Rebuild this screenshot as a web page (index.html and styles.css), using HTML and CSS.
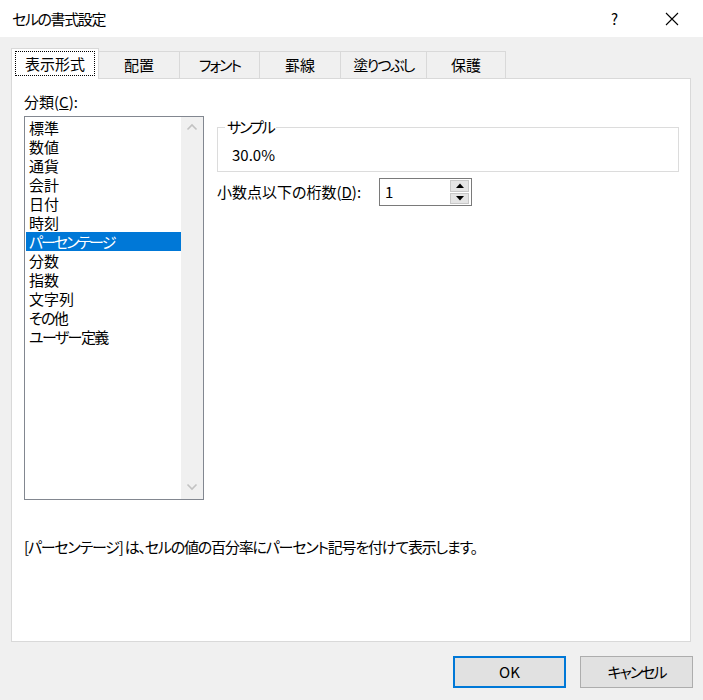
FILE: index.html
```html
<!DOCTYPE html>
<html lang="ja">
<head>
<meta charset="utf-8">
<link rel="stylesheet" href="styles.css">
</head>
<body>
<div class="dialog">
  <div class="titlebar">
    <div class="title">セルの書式設定</div>
    <div class="tb-btn help">?</div>
    <div class="tb-btn close">
      <svg width="14" height="14" viewBox="0 0 14 14"><path d="M1 1L13 13M13 1L1 13" stroke="#000" stroke-width="1.1" fill="none"/></svg>
    </div>
  </div>
  <div class="content">
    <div class="tabs">
      <div class="tab tab-sel"><span class="focus">表示形式</span></div>
      <div class="tab t2">配置</div>
      <div class="tab t3 kana">フォント</div>
      <div class="tab t4">罫線</div>
      <div class="tab t5 kana-s">塗りつぶし</div>
      <div class="tab t6">保護</div>
    </div>
    <div class="panel">
      <div class="cols">
        <div class="leftcol">
          <div class="label">分類(<u>C</u>):</div>
          <div class="listbox">
            <div class="items">
              <div class="item">標準</div>
              <div class="item">数値</div>
              <div class="item">通貨</div>
              <div class="item">会計</div>
              <div class="item">日付</div>
              <div class="item">時刻</div>
              <div class="item sel kana">パーセンテージ</div>
              <div class="item">分数</div>
              <div class="item">指数</div>
              <div class="item">文字列</div>
              <div class="item kana-s">その他</div>
              <div class="item kana-s">ユーザー定義</div>
            </div>
            <div class="scrollbar">
              <svg width="12" height="8" viewBox="0 0 12 8"><path d="M1.5 6.5L6 2L10.5 6.5" stroke="#c2c2c2" stroke-width="1.6" fill="none"/></svg>
              <svg width="12" height="8" viewBox="0 0 12 8"><path d="M1.5 1.5L6 6L10.5 1.5" stroke="#c2c2c2" stroke-width="1.6" fill="none"/></svg>
            </div>
          </div>
        </div>
        <div class="rightcol">
          <fieldset class="sample">
            <legend class="kana">サンプル</legend>
            <div class="sample-val">30.0%</div>
          </fieldset>
          <div class="decrow">
            <div class="declabel">小数点以下の桁数(<u>D</u>):</div>
            <div class="spin">
              <div class="spin-val">1</div>
              <div class="spin-btns">
                <div class="sbtn"><svg width="8" height="5" viewBox="0 0 8 5"><path d="M0 5L4 0.5L8 5Z" fill="#000"/></svg></div>
                <div class="sbtn"><svg width="8" height="5" viewBox="0 0 8 5"><path d="M0 0L4 4.5L8 0Z" fill="#000"/></svg></div>
              </div>
            </div>
          </div>
        </div>
      </div>
      <div class="desc">[パーセンテージ] は、セルの値の百分率にパーセント記号を付けて表示します。</div>
    </div>
  </div>
  <div class="buttons">
    <div class="btn ok">OK</div>
    <div class="btn kana">キャンセル</div>
  </div>
</div>
</body>
</html>
```

FILE: styles.css
```css
* { box-sizing: border-box; }
html, body { margin: 0; padding: 0; }
body {
  width: 703px;
  height: 700px;
  overflow: hidden;
  background: #f0f0f0;
  font-family: "Noto Sans CJK JP", "Noto Sans", sans-serif;
  font-size: 15px;
  color: #000;
  font-feature-settings: "palt";
}
.kana { letter-spacing: -2px; }
.kana-s { letter-spacing: -1.6px; }
.dialog {
  width: 703px;
  height: 700px;
  background: #f0f0f0;
  display: flex;
  flex-direction: column;
}
.titlebar {
  height: 37px;
  background: #fff;
  display: flex;
  align-items: center;
  padding-right: 3px;
}
.title {
  flex: 1;
  padding-left: 12px;
  font-size: 15px;
  line-height: 20px;
  letter-spacing: -1.4px;
}
.tb-btn {
  width: 57px;
  height: 37px;
  display: flex;
  align-items: center;
  justify-content: center;
}
.help { font-size: 15px; }
.content {
  padding: 11px 0 0 11px;
}
.tabs {
  display: flex;
  align-items: flex-end;
  height: 30px;
  position: relative;
  z-index: 1;
}
.tab {
  height: 27px;
  border: 1px solid #d9d9d9;
  border-bottom: none;
  margin-left: -1px;
  background: #f0f0f0;
  display: flex;
  align-items: center;
  justify-content: center;
  line-height: 20px;
}
.tab-sel {
  margin-left: 0;
  width: 88px;
  height: 31px;
  margin-bottom: -1px;
  background: #fff;
  border-color: #d9d9d9;
  padding: 2px 3px 3px;
  align-items: stretch;
  position: relative;
  z-index: 2;
}
.focus {
  flex: 1;
  border: 1px dotted #000;
  display: flex;
  align-items: center;
  justify-content: center;
}
.t2 { width: 82px; }
.t3 { width: 81px; }
.t4 { width: 82px; }
.t5 { width: 87px; }
.t6 { width: 80px; }
.panel {
  width: 680px;
  height: 564px;
  background: #fff;
  border: 1px solid #d9d9d9;
  padding: 13px 0 0 12px;
}
.cols {
  display: flex;
  gap: 13px;
}
.leftcol { width: 180px; }
.label {
  line-height: 20px;
  height: 20px;
  margin-bottom: 4px;
}
.listbox {
  height: 384px;
  border: 1px solid #828790;
  display: flex;
  padding: 1px 0 0 1px;
}
.items { width: 155px; }
.item {
  height: 19px;
  line-height: 19px;
  padding-left: 3px;
  white-space: nowrap;
}
.item.sel {
  background: #0078d7;
  color: #fff;
}
.scrollbar {
  width: 22px;
  margin-top: -1px;
  background: #f0f0f0;
  display: flex;
  flex-direction: column;
  justify-content: space-between;
  align-items: center;
  padding: 6px 0 8px;
}
.rightcol { width: 462px; }
.sample {
  margin: 25px 0 0;
  border: 1px solid #dcdcdc;
  padding: 8px 0 6px 7px;
}
.sample legend {
  padding: 0 2px;
  line-height: 20px;
}
.sample-val {
  line-height: 20px;
  padding-left: 7px;
}
.decrow {
  display: flex;
  align-items: center;
  margin-top: 6px;
}
.declabel {
  width: 162px;
  line-height: 20px;
}
.spin {
  width: 93px;
  height: 28px;
  border: 1px solid #7a7a7a;
  display: flex;
  align-items: center;
  padding: 1px 2px 1px 5px;
}
.spin-val { flex: 1; line-height: 20px; }
.spin-btns {
  width: 19px;
  height: 24px;
  display: flex;
  flex-direction: column;
  gap: 1px;
}
.sbtn {
  flex: 1;
  background: #e5e5e5;
  border: 1px solid #c8c8c8;
  display: flex;
  align-items: center;
  justify-content: center;
}
.desc {
  margin-top: 37px;
  line-height: 20px;
  white-space: nowrap;
  letter-spacing: -1.2px;
}
.buttons {
  display: flex;
  justify-content: flex-end;
  gap: 14px;
  margin-top: 14px;
  padding-right: 10px;
}
.btn {
  width: 113px;
  height: 32px;
  background: #e1e1e1;
  border: 1px solid #adadad;
  display: flex;
  align-items: center;
  justify-content: center;
  line-height: 20px;
}
.btn.ok { border: 2px solid #0078d7; }
```
